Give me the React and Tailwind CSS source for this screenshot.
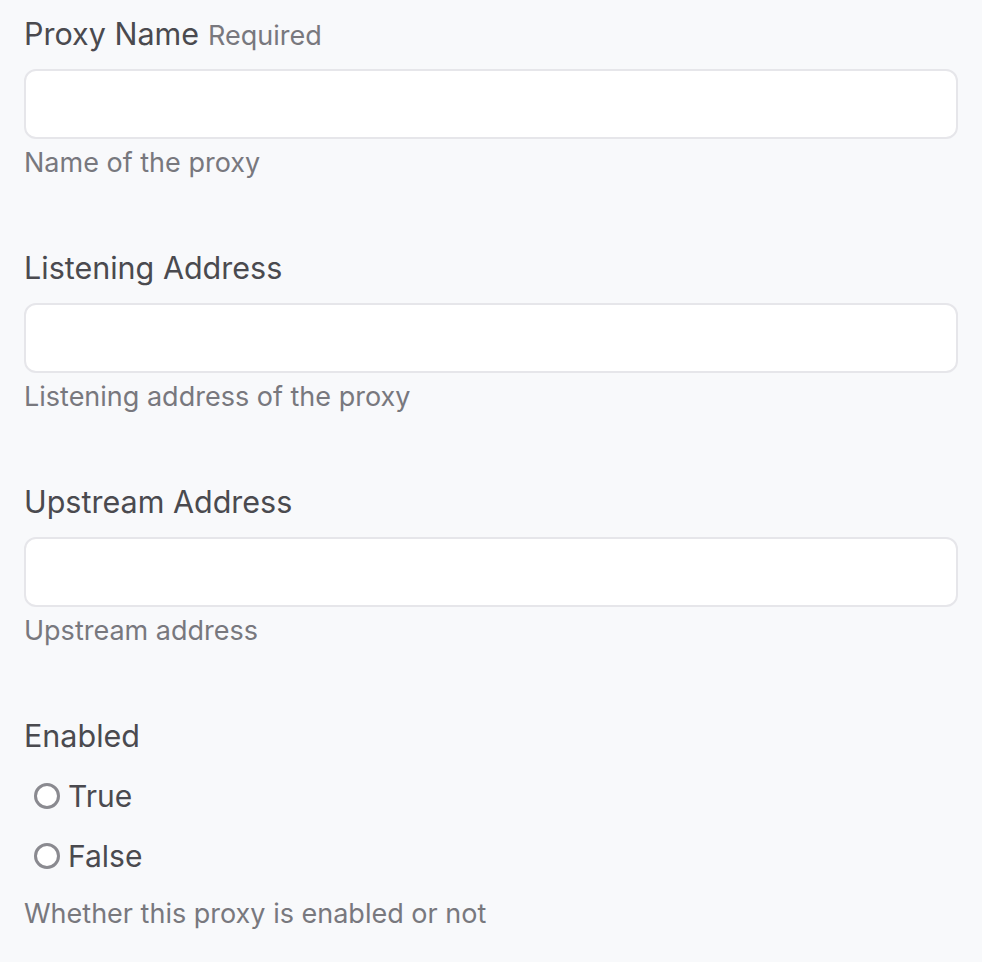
import React from "react";

function Field({ label, required, help }) {
  return (
    <div className="flex flex-col">
      <div className="h-[36px] leading-[36px] text-[30.5px] text-[#4a4a4f] flex items-baseline gap-[9px]">
        <span>{label}</span>
        {required && <span className="text-[27px] text-[#78787e]">Required</span>}
      </div>
      <div className="mt-[17px] h-[70px] w-full rounded-[12px] border-2 border-[#e6e6ea] bg-white" />
      <div className="mt-[10px] h-[27px] leading-[27px] text-[27px] text-[#78787e]">{help}</div>
    </div>
  );
}

function Radio({ label }) {
  return (
    <label className="flex items-center h-[36px] leading-[36px] pl-[10px]">
      <span className="w-[26px] h-[26px] rounded-full border-[3px] border-[#8a8a90] bg-white shrink-0" />
      <span className="ml-[8px] text-[30px] text-[#4a4a4f]">{label}</span>
    </label>
  );
}

export default function App() {
  return (
    <div
      className="min-h-screen bg-[#f8f9fb] px-6 pt-[16px]"
      style={{ fontFamily: "Inter, 'Noto Sans', sans-serif" }}
    >
      <div className="flex flex-col gap-[74px]">
        <Field label="Proxy Name" required help="Name of the proxy" />
        <Field label="Listening Address" help="Listening address of the proxy" />
        <Field label="Upstream Address" help="Upstream address" />
        <div className="flex flex-col">
          <div className="h-[36px] leading-[36px] text-[30.5px] text-[#4a4a4f]">Enabled</div>
          <div className="mt-[24px] flex flex-col gap-[24px]">
            <Radio label="True" />
            <Radio label="False" />
          </div>
          <div className="mt-[26px] h-[27px] leading-[27px] text-[27px] text-[#78787e]">
            Whether this proxy is enabled or not
          </div>
        </div>
      </div>
    </div>
  );
}
